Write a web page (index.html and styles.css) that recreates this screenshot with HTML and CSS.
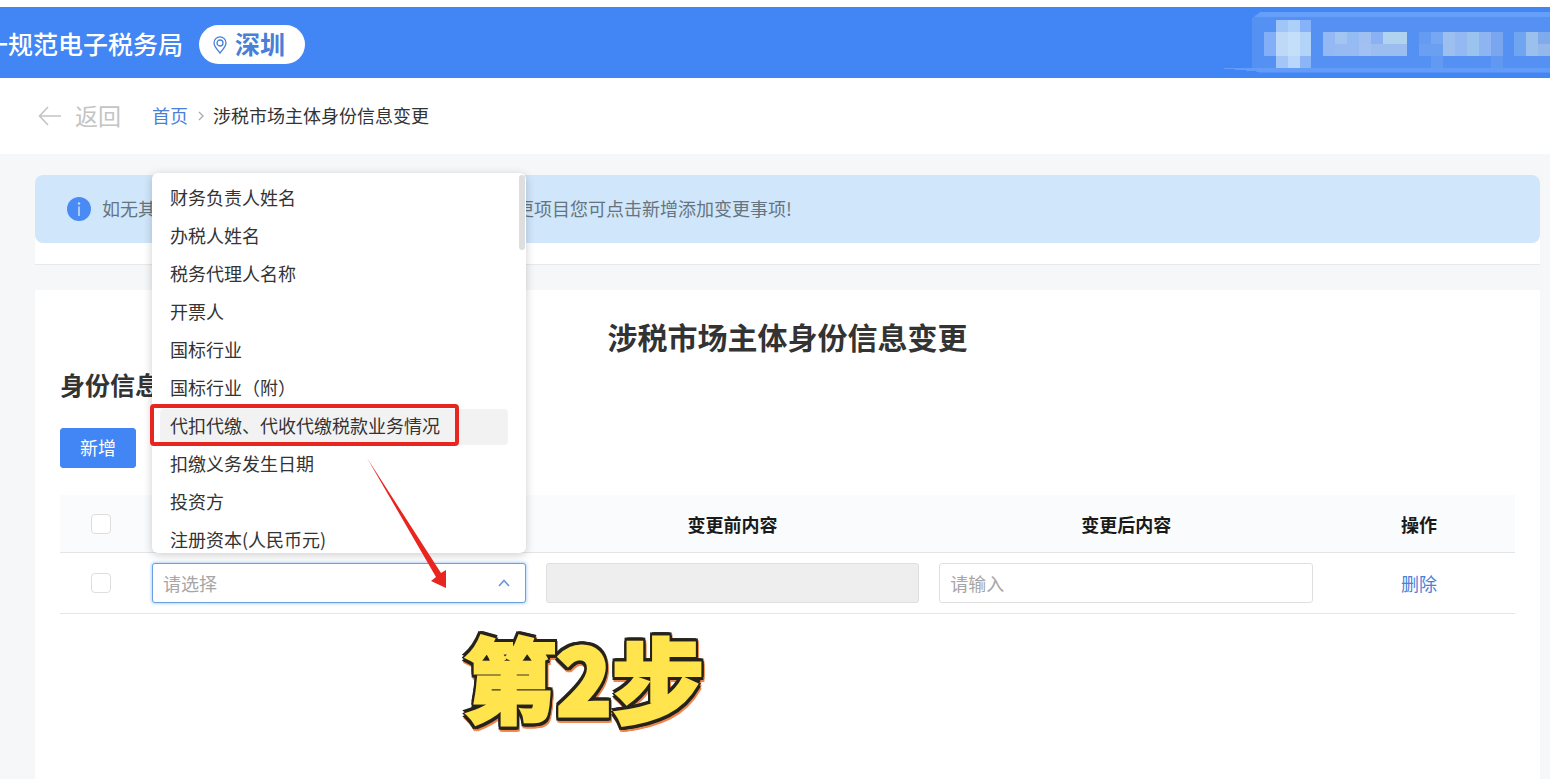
FILE: index.html
```html
<!DOCTYPE html>
<html lang="zh-CN">
<head>
    <meta charset="UTF-8">
    <title>涉税市场主体身份信息变更</title>
    <link rel="stylesheet" href="styles.css">
</head>
<body>
<header class="header">
    <div class="logo"><span>一规范电子税务局</span></div>
    <button type="button" class="city">
        <svg width="14" height="18" viewBox="0 0 14 18" fill="none" stroke="#4a7fd6" stroke-width="1.3">
            <path d="M7 17C4.500 13.500 1 10.500 1 6.900a6 6 0 0 1 12 0C13 10.500 9.500 13.500 7 17z"/>
            <circle cx="7" cy="7" r="3"/>
        </svg>
        <span>深圳</span>
    </button>
    <svg class="user" width="298" height="61" viewBox="0 0 298 61" shape-rendering="crispEdges">
        <path d="M0 6L8 0H298V61H8L0 58z" fill="#5590f3"/>
        <path d="M2 5L9 0H298V5z" fill="#669ffa"/>
        <path d="M-34 56H298V60H10z" fill="#629bf8"/>
        <rect x="12" y="20" width="12" height="24" fill="#82aff7"/>
        <rect x="24" y="8" width="12" height="12" fill="#9fc5f9"/>
        <rect x="36" y="8" width="12" height="12" fill="#add0fa"/>
        <rect x="48" y="8" width="11" height="12" fill="#85b2f8"/>
        <rect x="24" y="20" width="12" height="24" fill="#bdd9f7"/>
        <rect x="36" y="20" width="12" height="24" fill="#c4dff9"/>
        <rect x="48" y="20" width="11" height="24" fill="#b2d4f9"/>
        <rect x="24" y="44" width="12" height="12" fill="#a4c6f7"/>
        <rect x="36" y="44" width="12" height="12" fill="#b9d7fa"/>
        <rect x="48" y="44" width="11" height="12" fill="#8cb5f6"/>
        <rect x="71" y="20" width="12" height="24" fill="#93b8f3"/>
        <rect x="83" y="20" width="12" height="12" fill="#a3c5f1"/>
        <rect x="95" y="20" width="12" height="12" fill="#95bbf3"/>
        <rect x="107" y="20" width="12" height="12" fill="#a0c0f2"/>
        <rect x="119" y="20" width="12" height="12" fill="#89b1f3"/>
        <rect x="131" y="20" width="24" height="12" fill="#b0d3ef"/>
        <rect x="83" y="32" width="24" height="12" fill="#98baf2"/>
        <rect x="107" y="32" width="12" height="12" fill="#a2c0f1"/>
        <rect x="119" y="32" width="36" height="12" fill="#9bbdf0"/>
        <rect x="167" y="20" width="12" height="12" fill="#659cf1"/>
        <rect x="179" y="20" width="12" height="12" fill="#77a7f2"/>
        <rect x="167" y="32" width="24" height="12" fill="#6b9ff1"/>
        <rect x="191" y="20" width="12" height="24" fill="#9dbff0"/>
        <rect x="203" y="20" width="12" height="24" fill="#94b8f1"/>
        <rect x="215" y="20" width="12" height="24" fill="#9ac3ed"/>
        <rect x="227" y="20" width="12" height="24" fill="#8eb4f1"/>
        <rect x="239" y="20" width="12" height="24" fill="#79a6ef"/>
        <rect x="179" y="44" width="12" height="12" fill="#629af3"/>
        <rect x="239" y="44" width="12" height="12" fill="#6098f2"/>
        <rect x="262" y="20" width="12" height="24" fill="#6fa5f1"/>
        <rect x="274" y="20" width="12" height="24" fill="#9cc0ee"/>
        <rect x="286" y="20" width="12" height="12" fill="#7faaeb"/>
        <rect x="286" y="32" width="12" height="12" fill="#94b7ec"/>
    </svg>
</header>

<nav class="crumbs">
    <a href="#" class="back">
        <svg width="24" height="20" viewBox="0 0 24 20" fill="none" stroke="#c4c4c4" stroke-width="1.600">
            <path d="M23 10H2M10 1L1.500 10L10 19"/>
        </svg>
        <span>返回</span>
    </a>
    <a href="#" class="home">首页</a>
    <svg class="sep" width="6" height="10" viewBox="0 0 6 10" fill="none" stroke="#aaa" stroke-width="1.300">
        <path d="M1 1L5 5L1 9"/>
    </svg>
    <span class="current">涉税市场主体身份信息变更</span>
</nav>

<main class="main">
    <div class="tips">
        <div class="alert">
            <svg width="24" height="24" viewBox="0 0 24 24">
                <circle cx="12" cy="12" r="12" fill="#4a8af4"/>
                <path d="M12 9.500V19" stroke="#c5dcfb" stroke-width="1.600"/>
                <circle cx="12" cy="6.500" r="1.200" fill="#c5dcfb"/>
            </svg>
            <p>如无其他变更事项请直接提交即可，如需添加其他变更项目您可点击新增添加变更事项!</p>
        </div>
    </div>

    <section class="panel">
        <h1>涉税市场主体身份信息变更</h1>
        <h2>身份信息</h2>
        <div class="btns">
            <button type="button" class="btn btn-primary">新增</button>
            <button type="button" class="btn">删除</button>
        </div>
        <table class="table">
            <colgroup>
                <col class="col-check">
                <col>
                <col>
                <col>
                <col class="col-op">
            </colgroup>
            <thead>
            <tr>
                <th><input type="checkbox" aria-label="全选"></th>
                <th>变更项目</th>
                <th>变更前内容</th>
                <th>变更后内容</th>
                <th>操作</th>
            </tr>
            </thead>
            <tbody>
            <tr>
                <td><input type="checkbox" aria-label="选择此行"></td>
                <td>
                    <div class="picker">
                        <select class="field" aria-label="变更项目">
                            <option>请选择</option>
                        </select>
                        <svg class="caret" width="12" height="8" viewBox="0 0 12 8" fill="none" stroke="#6c9ae0" stroke-width="1.800">
                            <path d="M1 7L6 1.500L11 7"/>
                        </svg>
                        <ul class="menu">
                            <li>财务负责人姓名</li>
                            <li>办税人姓名</li>
                            <li>税务代理人名称</li>
                            <li>开票人</li>
                            <li>国标行业</li>
                            <li>国标行业（附）</li>
                            <li class="on">代扣代缴、代收代缴税款业务情况</li>
                            <li>扣缴义务发生日期</li>
                            <li>投资方</li>
                            <li>注册资本(人民币元)</li>
                        </ul>
                        <span class="bar"></span>
                        <!-- 操作指引：红框、箭头、步骤 -->
                        <span class="mark"></span>
                        <svg class="arrow" width="80" height="131" viewBox="0 0 80 131">
                            <path d="M0 0L74 115L79 112V130L64 123L69 119z" fill="#e8261f"/>
                        </svg>
                        <strong class="step">第2步</strong>
                    </div>
                </td>
                <td><input type="text" class="field" aria-label="变更前内容" disabled></td>
                <td><input type="text" class="field" aria-label="变更后内容" placeholder="请输入"></td>
                <td><a href="#" class="del">删除</a></td>
            </tr>
            </tbody>
        </table>
    </section>
</main>
</body>
</html>
```

FILE: styles.css
```css
* {
    box-sizing: border-box;
}

body, h1, h2, p, ul {
    margin: 0;
    padding: 0;
}

body, button, input, select {
    font-family: "Noto Sans CJK SC", "Liberation Sans", sans-serif;
    font-size: 18px;
}

body {
    display: flex;
    flex-direction: column;
    min-height: 100vh;
    padding-top: 7px;
    background: #fff;
    color: #333;
    line-height: 26px;
}

a {
    text-decoration: none;
    color: #4a80d8;
}

ul {
    list-style: none;
}

svg {
    display: block;
    flex: none;
}

/* 顶部 */
.header {
    display: flex;
    align-items: center;
    height: 71px;
    background: #4285f4;
}

.logo {
    display: flex;
    justify-content: flex-end;
    width: 183px;
    overflow: hidden;
    color: #fff;
    font-size: 25px;
    font-weight: 500;
    line-height: 36px;
    white-space: nowrap;
}

.city {
    display: flex;
    align-items: center;
    gap: 8px;
    height: 39px;
    margin: 4px 0 0 16px;
    padding: 0 20px 0 14px;
    border: 0;
    border-radius: 20px;
    background: #fff;
    color: #4a7fd6;
    font-size: 25px;
    font-weight: 700;
    line-height: 36px;
}

.city span {
    padding-bottom: 3px;
}

.user {
    margin-left: auto;
    overflow: visible;
}

/* 面包屑 */
.crumbs {
    display: flex;
    align-items: center;
    height: 76px;
    padding-left: 38px;
}

.back {
    display: flex;
    align-items: center;
    gap: 13px;
    margin-right: 31px;
    color: #c4c4c4;
    font-size: 23px;
}

.back span, .home, .current {
    padding-bottom: 2px;
}

.sep {
    margin: 0 9px 0 10px;
}

/* 内容 */
.main {
    display: flex;
    flex: 1;
    flex-direction: column;
    gap: 25px;
    padding: 21px 10px 0 35px;
    background: #f5f7f9;
}

.tips {
    padding-bottom: 21px;
    border-bottom: 1px solid #e6e8ea;
    border-radius: 8px 8px 0 0;
    background: #fff;
}

.alert {
    display: flex;
    align-items: center;
    gap: 11px;
    height: 68px;
    padding: 0 32px;
    border-radius: 8px;
    background: #d0e6fb;
    color: #66747f;
}

.alert p {
    padding-bottom: 2px;
}

.panel {
    flex: 1;
    padding: 25px;
    background: #fff;
}

h1 {
    font-size: 30px;
    line-height: 42px;
    text-align: center;
}

h2 {
    margin-top: 12px;
    font-size: 25px;
    line-height: 30px;
}

.btns {
    display: flex;
    gap: 16px;
    margin: 29px 0 27px;
}

.btn {
    height: 40px;
    padding: 0 19px 3px;
    border: 1px solid #4285f4;
    border-radius: 3px;
    background: #fff;
    color: #4285f4;
}

.btn-primary {
    background: #4285f4;
    color: #fff;
}

/* 表格 */
.table {
    width: 100%;
    table-layout: fixed;
    border-collapse: separate;
    border-spacing: 0;
    text-align: center;
}

.col-check {
    width: 82px;
}

.col-op {
    width: 192px;
}

th, td {
    padding: 10px;
    border-bottom: 1px solid #e3e5e7;
}

th {
    height: 58px;
    background: #f9fbfd;
    color: #1a1a1a;
}

input[type=checkbox] {
    display: block;
    width: 20px;
    height: 20px;
    margin: 0 auto;
    appearance: none;
    border: 1px solid #dedede;
    border-radius: 4px;
    background: #fff;
}

.field {
    display: block;
    width: 100%;
    height: 40px;
    padding: 0 10px;
    appearance: none;
    border: 1px solid #dfdfdf;
    border-radius: 3px;
    outline: none;
    background: #fff;
    color: #a6a6a6;
}

.field::placeholder {
    color: #a6a6a6;
}

.field:disabled {
    background: #eee;
}

/* 下拉 */
.picker {
    position: relative;
    text-align: left;
}

.picker .field {
    border-color: #6a9fe0;
    box-shadow: 0 0 3px 1px #b9d9f8;
}

.caret {
    position: absolute;
    top: 16px;
    right: 16px;
}

.menu {
    position: absolute;
    bottom: 50px;
    left: 0;
    width: 100%;
    height: 380px;
    padding: 8px 18px 0 8px;
    overflow: hidden;
    border-radius: 6px;
    background: #fff;
    box-shadow: 0 2px 10px rgba(0, 0, 0, .2);
}

.menu li {
    height: 36px;
    margin-bottom: 2px;
    padding-left: 10px;
    border-radius: 4px;
    line-height: 32px;
    white-space: nowrap;
}

.menu .on {
    background: #f2f2f2;
}

.bar {
    position: absolute;
    bottom: 353px;
    right: 1px;
    width: 6px;
    height: 75px;
    border-radius: 3px;
    background: #dedede;
}

.mark {
    position: absolute;
    bottom: 157px;
    left: -2px;
    width: 309px;
    height: 42px;
    border: 4px solid #e8261f;
    border-radius: 4px;
}

.arrow {
    position: absolute;
    top: -105px;
    left: 215px;
}

.step {
    position: absolute;
    top: 59px;
    left: 312px;
    color: #ffe44d;
    font-size: 92px;
    font-weight: 900;
    line-height: 108px;
    white-space: nowrap;
    -webkit-text-stroke: 3px #ffe44d;
    filter: drop-shadow(2px 0 0 #25231c) drop-shadow(-2px 0 0 #25231c)
        drop-shadow(0 3px 0 #25231c) drop-shadow(0 -3px 0 #25231c)
        drop-shadow(1px 2px 0 #f0844a);
}
```
